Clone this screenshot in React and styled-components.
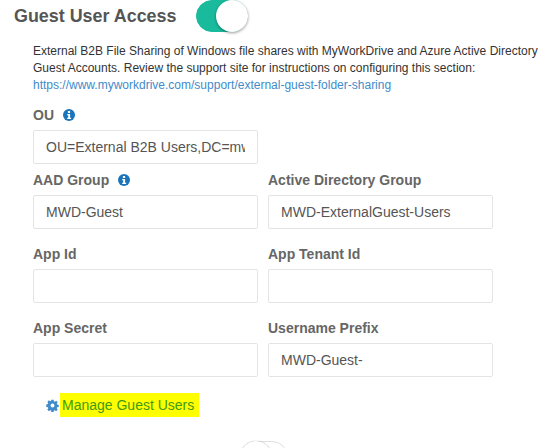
import React from 'react';
import styled, { createGlobalStyle } from 'styled-components';

const Global = createGlobalStyle`
  html, body { margin: 0; padding: 0; background: #fff; height: 448px; overflow: hidden; }
  * { box-sizing: border-box; }
  body { font-family: "Liberation Sans", Arial, sans-serif; color: #333; }
`;

const Page = styled.div`
  width: 555px;
  height: 448px;
  overflow: hidden;
`;

const Header = styled.div`
  display: flex;
  align-items: center;
  height: 32px;
  padding-left: 14px;
`;

const Title = styled.h2`
  margin: 0;
  width: 182px;
  font-size: 17.9px;
  font-weight: 700;
  line-height: 30px;
  color: #555;
`;

const Switch = styled.div`
  width: ${p => (p.$small ? 48 : 52)}px;
  height: 32px;
  border-radius: 16px;
  position: relative;
  flex: none;
  background: ${p => (p.$on ? '#1abb9c' : '#fff')};
  border: 1px solid ${p => (p.$on ? '#1abb9c' : '#dfdfdf')};
`;

const Knob = styled.span`
  position: absolute;
  top: -1px;
  ${p => (p.$on ? 'right: -1px;' : 'left: -1px;')}
  width: 32px;
  height: 32px;
  border-radius: 50%;
  background: #fff;
  box-shadow: ${p => (p.$on ? '0 1px 3px rgba(0,0,0,.4)' : '0 0 1px rgba(0,0,0,.45)')};
`;

const Body = styled.div`
  padding: 11px 0 0 33px;
`;

const Intro = styled.p`
  margin: 0;
  font-size: 12px;
  line-height: 17px;
  color: #333;
`;

const DocLink = styled.a`
  color: #428bca;
  text-decoration: none;
`;

const Grid = styled.div`
  display: grid;
  grid-template-columns: 225px 225px;
  column-gap: 10px;
  row-gap: 15px;
  margin-top: 4px;
`;

const SingleRow = styled.div`
  width: 225px;
  margin-top: 11px;
  margin-bottom: 6px;
`;

const Field = styled.div`
  display: flex;
  flex-direction: column;
`;

const Label = styled.label`
  display: flex;
  align-items: center;
  gap: 9px;
  height: 20px;
  margin-bottom: 5px;
  font-size: 14px;
  font-weight: 700;
  color: #666;
`;

const TextInput = styled.input`
  width: 225px;
  height: 34px;
  padding: 0 12px;
  border: 1px solid #e4e4e4;
  border-radius: 2px;
  background: #fff;
  font-family: inherit;
  font-size: 14px;
  color: #555;
  outline: none;
`;

const ManageRow = styled.div`
  display: flex;
  align-items: center;
  margin: 16px 0 0 13px;
  height: 24px;
`;

const GearWrap = styled.span`
  display: flex;
  width: 14px;
`;

const Highlight = styled.a`
  display: block;
  background: #ffff00;
  color: #3f9a16;
  font-size: 14px;
  line-height: 24px;
  padding: 0 5px 0 2px;
  text-decoration: none;
`;

const BottomRow = styled.div`
  display: flex;
  margin: 24px 0 0 207px;
`;

const InfoIcon = () => (
  <svg width="12" height="12" viewBox="0 0 12 12" aria-hidden="true">
    <circle cx="6" cy="6" r="6" fill="#1a75bb" />
    <rect x="4.9" y="2" width="2.2" height="2" fill="#fff" />
    <path d="M4.2 5h2.9v3.8h1V10H4.2V8.8h1V6.2h-1z" fill="#fff" />
  </svg>
);

const GearIcon = () => (
  <svg width="13" height="13" viewBox="0 0 14 14" aria-hidden="true">
    <path
      fill="#428bca"
      fillRule="evenodd"
      d="M5.8 0.8h2.4l.3 1.7 1 .4 1.4-1 1.7 1.7-1 1.4.4 1 1.7.3v2.4l-1.7.3-.4 1 1 1.4-1.7 1.7-1.4-1-1 .4-.3 1.7H5.8l-.3-1.7-1-.4-1.4 1-1.7-1.7 1-1.4-.4-1-1.7-.3V5.8l1.7-.3.4-1-1-1.4 1.7-1.7 1.4 1 1-.4zM7 4.9a2.1 2.1 0 1 0 0 4.2 2.1 2.1 0 0 0 0-4.2z"
    />
  </svg>
);

const fields = [
  { label: 'AAD Group', value: 'MWD-Guest', info: true },
  { label: 'Active Directory Group', value: 'MWD-ExternalGuest-Users' },
  { label: 'App Id', value: '' },
  { label: 'App Tenant Id', value: '' },
  { label: 'App Secret', value: '' },
  { label: 'Username Prefix', value: 'MWD-Guest-' },
];

export default function App() {
  return (
    <Page>
      <Global />
      <Header>
        <Title>Guest User Access</Title>
        <Switch $on>
          <Knob $on />
        </Switch>
      </Header>
      <Body>
        <Intro>
          External B2B File Sharing of Windows file shares with MyWorkDrive and Azure Active Directory
          <br />
          Guest Accounts. Review the support site for instructions on configuring this section:
          <br />
          <DocLink href="#">https://www.myworkdrive.com/support/external-guest-folder-sharing</DocLink>
        </Intro>
        <SingleRow>
          <Label>OU <InfoIcon /></Label>
          <TextInput readOnly value="OU=External B2B Users,DC=mwd,DC=local" />
        </SingleRow>
        <Grid>
          {fields.map(f => (
            <Field key={f.label}>
              <Label>{f.label} {f.info && <InfoIcon />}</Label>
              <TextInput readOnly value={f.value} />
            </Field>
          ))}
        </Grid>
        <ManageRow>
          <GearWrap><GearIcon /></GearWrap>
          <Highlight href="#">Manage Guest Users</Highlight>
        </ManageRow>
        <BottomRow>
          <Switch $small>
            <Knob />
          </Switch>
        </BottomRow>
      </Body>
    </Page>
  );
}
